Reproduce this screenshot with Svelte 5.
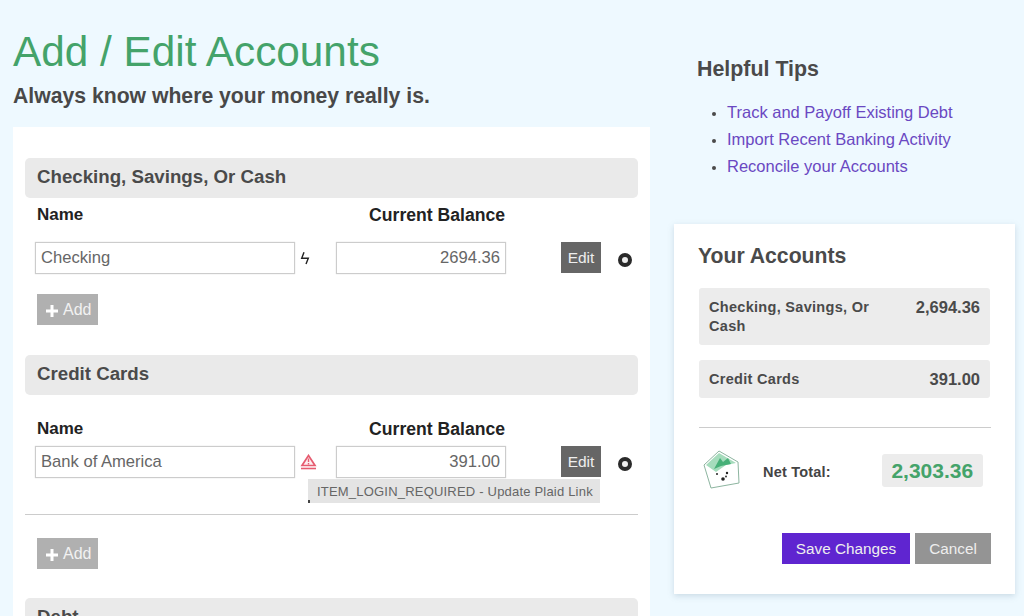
<script>
  let tips = ["Track and Payoff Existing Debt", "Import Recent Banking Activity", "Reconcile your Accounts"];
  let totals = [
    { name: "Checking, Savings, Or Cash", value: "2,694.36" },
    { name: "Credit Cards", value: "391.00" },
  ];
</script>

{#snippet plus()}
  <svg class="plus" width="14" height="14" viewBox="0 0 14 14"><path d="M7 1 V13 M1 7 H13" stroke="#fff" stroke-width="3" /></svg>
{/snippet}

<div class="page">
  <div class="left">
    <h1>Add / Edit Accounts</h1>
    <h2 class="tagline">Always know where your money really is.</h2>

    <div class="card">
      <div class="section-title">Checking, Savings, Or Cash</div>
      <div class="columns first">
        <span class="col-name">Name</span>
        <span class="col-balance">Current Balance</span>
      </div>
      <div class="row">
        <input class="name" value="Checking" />
        <span class="status">
          <svg width="10" height="14" viewBox="0 0 10 14"><path d="M4 1.3 L1.7 7.3 H8.3 L6 13" fill="none" stroke="#222" stroke-width="1.4" /></svg>
        </span>
        <input class="balance" value="2694.36" />
        <button class="edit">Edit</button>
        <span class="remove"></span>
      </div>
      <button class="add first-add">{@render plus()}Add</button>

      <div class="section-title credit">Credit Cards</div>
      <div class="columns second">
        <span class="col-name">Name</span>
        <span class="col-balance">Current Balance</span>
      </div>
      <div class="row">
        <input class="name" value="Bank of America" />
        <span class="status">
          <svg width="17" height="17" viewBox="0 0 17 17">
            <path d="M8.5 1.5 L15 11.5 H2 Z" fill="#fdeef0" stroke="#e65c70" stroke-width="1.7" />
            <path d="M8.5 4.5 V8 M8.5 9 V10.4" stroke="#e65c70" stroke-width="1.4" />
            <path d="M1 14.5 H16" stroke="#e65c70" stroke-width="1.6" />
          </svg>
          <span class="tooltip">ITEM_LOGIN_REQUIRED - Update Plaid Link</span>
        </span>
        <input class="balance" value="391.00" />
        <button class="edit">Edit</button>
        <span class="remove"></span>
      </div>
      <hr class="divider" />
      <button class="add">{@render plus()}Add</button>

      <div class="section-title debt">Debt</div>
    </div>
  </div>

  <div class="right">
    <h3>Helpful Tips</h3>
    <ul>
      {#each tips as tip}
        <li><span>{tip}</span></li>
      {/each}
    </ul>

    <div class="summary">
      <h3>Your Accounts</h3>
      {#each totals as t}
        <div class="total">
          <span>{t.name}</span>
          <span class="amount">{t.value}</span>
        </div>
      {/each}
      <hr />
      <div class="net">
        <svg class="logo" width="40" height="42" viewBox="0 0 40 42">
          <path d="M2 16 L17 2 L36 13 L37 34 L9 39 Z" fill="#fff" stroke="#8db5a0" stroke-width="1" />
          <path d="M4 16 L17 4 L34 14 L24 16 L14 23 Z" fill="#a5dcbc" />
          <path d="M12 20 L18 9 L21 13 L26 9 L29 15 L19 17 Z" fill="#47b078" />
          <circle cx="15" cy="25" r="1" fill="#222" />
          <circle cx="25" cy="24" r="1.2" fill="#222" />
          <circle cx="21" cy="30" r="1.8" fill="#222" />
          <circle cx="24" cy="27.5" r="0.9" fill="#222" />
        </svg>
        <span class="net-label">Net Total:</span>
        <span class="net-value">2,303.36</span>
      </div>
      <div class="actions">
        <button class="save">Save Changes</button>
        <button class="cancel">Cancel</button>
      </div>
    </div>
  </div>
</div>

<style>
  :global(body) {
    margin: 0;
    background: #eef9ff;
    overflow: hidden;
  }

  .page {
    display: flex;
    height: 616px;
    overflow: hidden;
    font-family: "Liberation Sans", Arial, sans-serif;
    color: #444;
  }

  .left {
    width: 637px;
    margin-left: 13px;
    flex-shrink: 0;
  }

  h1 {
    margin: 29px 0 0;
    font-size: 42.3px;
    line-height: 46px;
    font-weight: 400;
    color: #44a36a;
  }

  .tagline {
    margin: 7px 0 0;
    font-size: 21.2px;
    line-height: 28px;
    font-weight: 700;
    color: #484848;
  }

  .card {
    margin-top: 17px;
    background: #fff;
    padding: 31px 12px 0;
    height: 489px;
    box-sizing: border-box;
  }

  .section-title {
    height: 40px;
    line-height: 38px;
    padding-left: 12px;
    border-radius: 5px;
    background: #eaeaea;
    font-size: 18.7px;
    font-weight: 700;
    color: #4a4a4a;
  }

  .columns {
    display: flex;
    font-size: 17.6px;
    line-height: 20px;
    font-weight: 700;
    color: #222;
  }

  .columns.first { margin-top: 7px; }
  .columns.second { margin-top: 24px; }

  .col-name {
    width: 331px;
    padding-left: 12px;
    box-sizing: border-box;
    font-size: 17px;
  }

  .col-balance {
    width: 149px;
    text-align: right;
  }

  .row {
    display: flex;
    align-items: center;
    padding-left: 10px;
    height: 32px;
  }

  .columns.first + .row { margin-top: 17px; }
  .columns.second + .row { margin-top: 7px; }

  input {
    height: 32px;
    box-sizing: border-box;
    border: 1px solid #ccc;
    box-shadow: 0 0 1px #ccc;
    font: 16.6px "Liberation Sans", Arial, sans-serif;
    color: #666;
    padding: 0 5px;
    outline: none;
  }

  .name { width: 260px; }

  .balance {
    width: 170px;
    text-align: right;
  }

  .status {
    position: relative;
    width: 41px;
    display: flex;
    padding-left: 5px;
    box-sizing: border-box;
    align-items: center;
  }

  .tooltip {
    position: absolute;
    left: 13px;
    top: 25px;
    width: 292px;
    height: 24px;
    line-height: 25px;
    background: #e4e4e4;
    font-size: 13px;
    letter-spacing: 0.2px;
    color: #666;
    padding-left: 9px;
    box-sizing: border-box;
    white-space: nowrap;
    z-index: 1;
  }

  .tooltip::after {
    content: "";
    position: absolute;
    left: 0;
    bottom: 0;
    width: 2px;
    height: 3px;
    background: #444;
  }

  .edit {
    align-self: flex-start;
    margin-left: 55px;
    width: 40px;
    height: 31px;
    padding: 0;
    border: none;
    background: #666;
    color: #eee;
    font: 15.5px "Liberation Sans", Arial, sans-serif;
  }

  .remove {
    margin-left: 17px;
    margin-top: 3px;
    width: 14px;
    height: 14px;
    box-sizing: border-box;
    border: 4px solid #2a2a2a;
    border-radius: 50%;
    background: #eee;
  }

  .add {
    display: flex;
    align-items: center;
    justify-content: flex-start;
    margin-left: 12px;
    margin-top: 20px;
    width: 61px;
    height: 31px;
    padding: 0 0 0 8px;
    box-sizing: border-box;
    border: none;
    background: #b0b0b0;
    color: #f2f2f2;
    font: 16px "Liberation Sans", Arial, sans-serif;
  }

  .plus {
    margin: 2px 4px 0 0;
    flex-shrink: 0;
  }

  .section-title.credit { margin-top: 30px; }

  .divider {
    margin: 36px 0 0;
    border: none;
    border-top: 1px solid #ccc;
  }

  .divider + .add { margin-top: 23px; }

  .section-title.debt { margin-top: 29px; }

  .right {
    margin-left: 24px;
    width: 341px;
    flex-shrink: 0;
  }

  .right > h3 {
    margin: 56px 0 0 23px;
    font-size: 21.4px;
    line-height: 26px;
    font-weight: 700;
    color: #4a4a4a;
  }

  ul {
    margin: 17px 0 0;
    padding: 0 0 0 53px;
  }

  li {
    font-size: 16.5px;
    line-height: 27px;
    color: #4a4a4a;
  }

  li::marker { font-size: 13px; }

  li span { color: #6a48c2; }

  .summary {
    margin-top: 44px;
    height: 370px;
    box-sizing: border-box;
    background: #fff;
    padding: 19px 24px 0 24px;
    box-shadow: 0 2px 6px rgba(120, 150, 170, 0.3);
  }

  .summary h3 {
    margin: 0 0 19px;
    font-size: 21.2px;
    line-height: 26px;
    font-weight: 700;
    color: #4a4a4a;
  }

  .total {
    display: flex;
    justify-content: space-between;
    align-items: flex-start;
    gap: 30px;
    margin: 0 1px 15px 1px;
    padding: 10px 10px 9px 10px;
    border-radius: 3px;
    background: #ececec;
    font-size: 14.5px;
    line-height: 19px;
    font-weight: 700;
    letter-spacing: 0.3px;
    color: #4a4a4a;
  }

  .amount {
    font-size: 16.5px;
    letter-spacing: 0;
    white-space: nowrap;
  }

  .summary hr {
    margin: 29px 0 0 1px;
    border: none;
    border-top: 1px solid #ccc;
  }

  .net {
    display: flex;
    align-items: center;
    margin-top: 21px;
  }

  .logo { margin-left: 4px; flex-shrink: 0; }

  .net-label {
    margin-left: 21px;
    padding-top: 3px;
    font-size: 14.5px;
    font-weight: 700;
    letter-spacing: 0.2px;
  }

  .net-value {
    margin-left: 51px;
    width: 101px;
    height: 33px;
    line-height: 33px;
    text-align: center;
    border-radius: 3px;
    background: #ececec;
    color: #44a36a;
    font-size: 21px;
    font-weight: 700;
  }

  .actions {
    display: flex;
    justify-content: flex-end;
    gap: 5px;
    margin-top: 42px;
  }

  .actions button {
    height: 31px;
    padding: 0;
    border: none;
    font: 15.3px "Liberation Sans", Arial, sans-serif;
    color: #eee;
  }

  .save {
    width: 128px;
    background: #5f25d0;
  }

  .cancel {
    width: 76px;
    background: #949494;
  }
</style>
